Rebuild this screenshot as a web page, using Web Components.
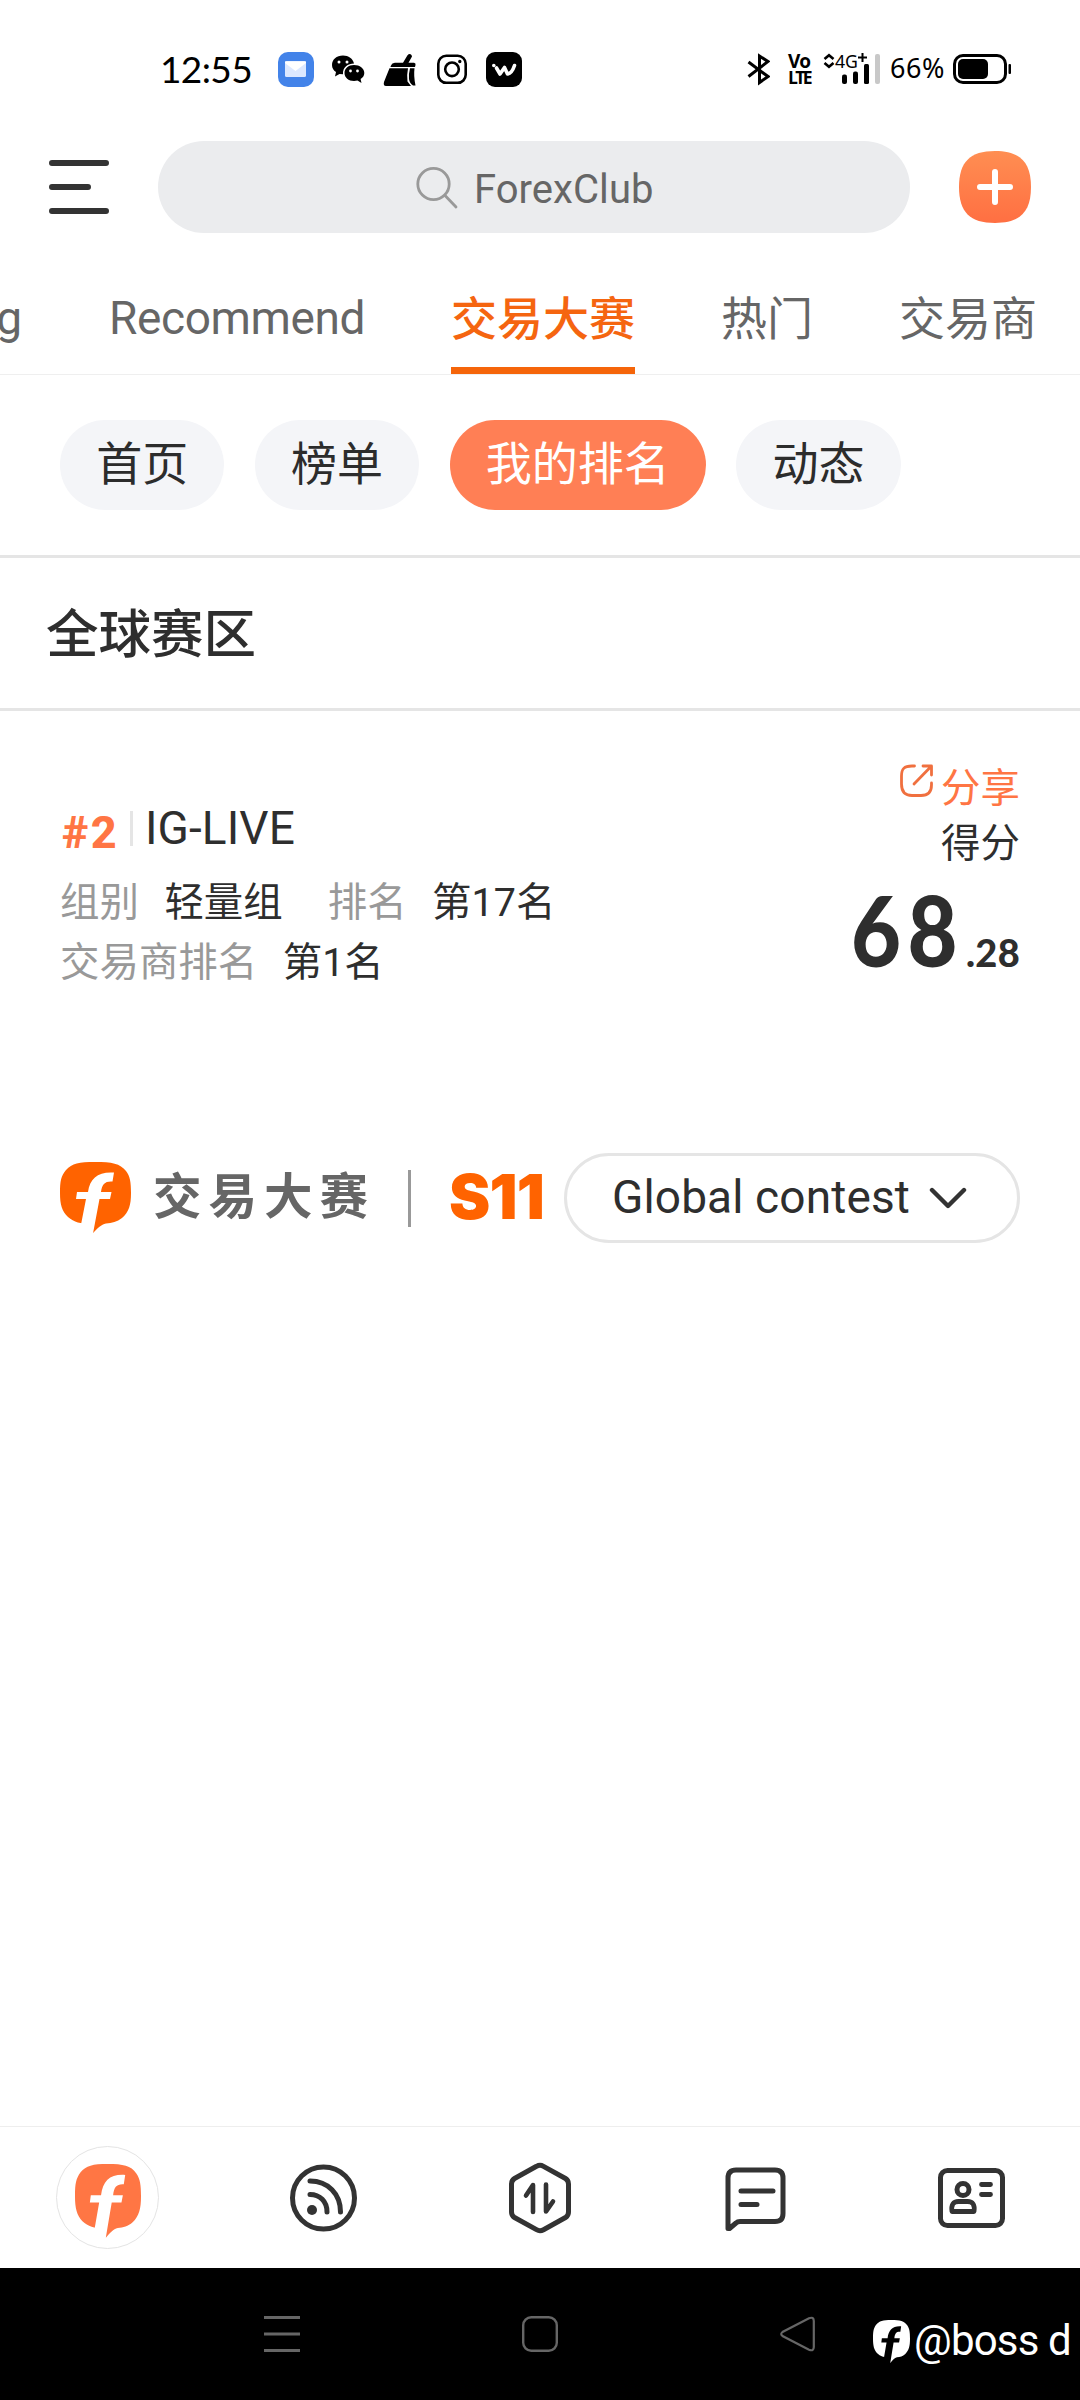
<!DOCTYPE html>
<html lang="zh-CN">
<head>
<meta charset="utf-8">
<title>交易大赛</title>
<style>
html,body{margin:0;padding:0;background:#fff}
body{width:1080px;height:2400px;overflow:hidden;font-family:Roboto,"Noto Sans CJK SC",sans-serif;color:#2e2e2e}
</style>
</head>
<body>
<contest-app></contest-app>
<script>
const define = (name, html, setup) => {
  const tpl = document.createElement('template');
  tpl.innerHTML = html;
  customElements.define(name, class extends HTMLElement {
    connectedCallback() {
      if (this.shadowRoot) return;
      this.attachShadow({mode: 'open'}).appendChild(tpl.content.cloneNode(true));
      if (setup) setup(this);
    }
  });
};

/* One line of text, tracked so that its advance equals the w attribute */
define('fit-line', `<style>:host{display:block;white-space:pre;flex:none}span{display:inline-block}</style><span><slot></slot></span>`, el => {
  const w = parseFloat(el.getAttribute('w'));
  if (!w) return;
  const s = el.shadowRoot.querySelector('span');
  const n = el.textContent.length;
  s.style.letterSpacing = (w - s.getBoundingClientRect().width) / n + 'px';
  el.style.width = w + 'px';
});

/* Speech-bubble brand mark; --f is the colour of the letter cut-out */
define('brand-mark', `<style>:host{display:block;flex:none}svg{display:block;width:100%;height:100%}</style>
<svg viewBox="0 0 71 71" preserveAspectRatio="none">
<path fill="currentColor" d="M35 0C52 0 60 1.500 66 9C70 14 71 20 71 31C71 43 69 50 62 56C57 60 52 61 46 61.500C41 62.500 38 66 33 71L30 62C21 62 14 60 8 55C2 49 0 43 0 31C0 19 1 14 6 8C12 1.500 19 0 35 0Z"/>
<path fill="var(--f,#fff)" d="M54 10.500L52.500 19.500C45 19 42 22 41 30H51.500L50 37H39.500L33 71.500H19L21.500 60L26 37H16L17 30H28C30 16 38 9.500 54 10.500Z"/></svg>`);

define('status-bar', `<style>
:host{display:flex;height:138px;align-items:flex-start;box-sizing:border-box;padding:52px 69px 0 160px;color:#000}
svg{display:block;flex:none}
.time{font:37px/34px Lato,sans-serif;margin-right:26px}
.sp{flex:1}
.volte{display:flex;flex-direction:column;font-family:"Open Sans",sans-serif;font-weight:700;width:22px;margin:1px 13px 0 18px}
.volte fit-line{height:16px;font-size:19px;line-height:17px}
.volte fit-line+fit-line{font-size:17.500px}
.net{font:18px/20px "Noto Sans",sans-serif;width:58px;overflow:visible}
.pct{font:27px/32px "Noto Sans",sans-serif;margin:0 8px 0 9px}
</style>
<fit-line class="time" w="92">12:55</fit-line>
<svg width="36" height="36" viewBox="0 0 36 36"><rect width="36" height="35" rx="10" fill="#4383e9"/><rect x="7" y="9" width="21" height="16" rx="1.500" fill="#dce8ff"/><path d="M7 9.500H28V11L17.500 19L7 11Z" fill="#fff"/></svg>
<svg width="36" height="36" viewBox="0 0 36 36" style="margin-left:16px"><path d="M13 3.500C6.500 3.500 2 7.500 2 13C2 16 3.500 18.500 6 20L5 24.500L9.500 22L13 22.300C12.500 15 18 11.500 24 11.500C23 6.500 18.500 3.500 13 3.500Z"/><path d="M24 13C18.500 13 14.500 16.500 14.500 21C14.500 25.500 18.500 29 24 29L27.500 28.500L31.500 31L30.600 27C33 25.500 34.300 23.500 34.300 21C34.300 16.500 29.700 13 24 13Z"/><g fill="#fff"><circle cx="9" cy="10" r="1.500"/><circle cx="17" cy="10" r="1.500"/><circle cx="20.500" cy="19" r="1.400"/><circle cx="27.500" cy="19" r="1.400"/></g></svg>
<svg width="36" height="36" viewBox="0 0 36 36" style="margin-left:16px"><path d="M8.500 15C9.500 11.500 11 10.700 14 10.700H21L25.500 3.200Q27.500 1 29.500 3L30 4.500L26.500 10.700H32Q34 11 33.500 13L33 15ZM7.500 16.300H26Q24.500 24 25.500 29.500L29 34H4Q1 34 2 30Q4 25 7.500 16.300ZM28 16.300H32.500Q31.500 24 33.500 33.500H31Q27.500 31 27 27Q26.500 22 28 16.300Z"/></svg>
<svg width="36" height="36" viewBox="0 0 36 36" style="margin-left:16px" fill="none" stroke="#000" stroke-width="2.600"><rect x="4.300" y="3.800" width="27.400" height="27" rx="8"/><circle cx="18" cy="17.300" r="6.800"/><circle cx="25.800" cy="9.500" r="1" fill="#000" stroke-width="1.400"/></svg>
<svg width="36" height="36" viewBox="0 0 36 36" style="margin-left:16px"><rect width="36" height="35" rx="9"/><path d="M10.500 16L14 22L18.500 15.500L21.500 22C25 21.500 27 18 28.500 13.500" fill="none" stroke="#fff" stroke-width="3.600" stroke-linecap="round" stroke-linejoin="round"/><circle cx="7.800" cy="13.500" r="1.800" fill="#fff"/></svg>
<div class="sp"></div>
<svg width="24" height="36" viewBox="0 0 24 36" fill="none" stroke="#000" stroke-width="3"><path d="M2.500 10L22 24.500L13.500 30.500V4L22 9.500L2.500 24.500"/></svg>
<div class="volte"><fit-line w="22">Vo</fit-line><fit-line w="22">LTE</fit-line></div>
<svg class="net" width="58" height="36" viewBox="0 0 58 36"><path d="M1.500 7L6 3.200L10.500 7M1.500 11L6 14.800L10.500 11" fill="none" stroke="#000" stroke-width="2.600"/><text x="12" y="16" textLength="23" lengthAdjust="spacingAndGlyphs">4G</text><path d="M35 5.500H44M39.500 1V10" stroke="#000" stroke-width="2"/><rect x="19" y="22.500" width="5" height="9.500" rx="2"/><rect x="30" y="19.500" width="5" height="12.500" rx="2"/><rect x="41" y="12" width="5" height="20" rx="1.500"/><rect x="52" y="2" width="5" height="30" rx="2" fill="#c8c8c8"/></svg>
<fit-line class="pct" w="55">66%</fit-line>
<svg width="58" height="36" viewBox="1 0 58 36"><rect x="2.500" y="3.500" width="51" height="27" rx="8.500" fill="none" stroke="#000" stroke-width="3"/><rect x="6" y="7" width="30" height="20" rx="5"/><rect x="56.500" y="12" width="2.500" height="10" rx="1"/></svg>`);

define('search-header', `<style>
:host{display:flex;height:98px;align-items:flex-start;padding:3px 49px 0;box-sizing:border-box}
svg{display:block;flex:none}
.menu{margin-top:19px}
.pill{margin-left:49px;width:752px;height:92px;border-radius:46px;background:#ebecee;display:flex;align-items:center;justify-content:flex-start;padding-left:258px;box-sizing:border-box;color:#666;font-size:40px;line-height:92px}
.pill fit-line{margin-left:15px;padding-top:5px}
.add{margin:10px 0 0 49px}
</style>
<svg class="menu" width="60" height="54" viewBox="0 0 60 54" stroke="#333" stroke-width="6" stroke-linecap="round"><path d="M3 3H57M3 27H39M3 51H57"/></svg>
<div class="pill"><svg width="43" height="43" viewBox="0 0 43 43" fill="none" stroke="#999" stroke-width="2.800" stroke-linecap="round"><circle cx="17.500" cy="18" r="15.700"/><path d="M29.500 30L40 41"/></svg><fit-line w="179.500">ForexClub</fit-line></div>
<svg class="add" width="72" height="72" viewBox="0 0 72 72"><defs><linearGradient id="g" x2="0" y2="1"><stop stop-color="#ff8e52"/><stop offset="1" stop-color="#ff6f42"/></linearGradient></defs><path d="M36 0C61 0 72 11 72 36S61 72 36 72S0 61 0 36S11 0 36 0Z" fill="url(#g)"/><path d="M21 36H51M36 21V51" stroke="#fff" stroke-width="6" stroke-linecap="round"/></svg>`);

define('tab-strip', `<style>
:host{display:flex;gap:86px;height:139px;box-sizing:border-box;border-bottom:1px solid #efefef;font-size:46px;line-height:122px;color:#666;padding-top:21px;overflow:hidden}
.first{width:22px;margin-right:1px;display:flex;justify-content:flex-end}
.on{color:#f56510;font-weight:500;height:117px;display:flex;flex-direction:column}
.on fit-line{padding-top:1px}
.on i{display:block;height:7px;background:#f5650a;margin-top:-13px;flex:none}
.c{padding-top:1px}
</style>
<div class="first">g</div><fit-line w="256">Recommend</fit-line>
<div class="on"><fit-line w="184">交易大赛</fit-line><i></i></div>
<div class="c">热门</div><fit-line class="c" w="138">交易商</fit-line>`);

define('filter-chip', `<style>
:host{display:block;height:90px;line-height:88px;border-radius:45px;padding:0 36.200px;box-sizing:border-box;background:#f4f5f8;font-size:46px;color:#2c2c2c}
:host([active]){background:#ff7f55;color:#fff}
</style><slot></slot>`);

define('chip-row', `<style>
:host{display:flex;gap:30.400px;height:183px;padding:45px 60px 0;box-sizing:border-box;border-bottom:3px solid #e5e5e5}
</style><filter-chip>首页</filter-chip><filter-chip>榜单</filter-chip><filter-chip active>我的排名</filter-chip><filter-chip>动态</filter-chip>`);

define('section-title', `<style>
:host{display:block;height:153px;box-sizing:border-box;border-bottom:3px solid #e5e5e5;padding-left:46px;font-size:52.500px;line-height:154px;font-weight:500;color:#2e2e2e}
</style><slot></slot>`);

define('info-pair', `<style>:host{display:flex;gap:25.500px}b{font-weight:400;color:#999}</style><b><slot name="k"></slot></b><span><slot></slot></span>`);

define('rank-card', `<style>
:host{display:flex;justify-content:space-between;height:392px;box-sizing:border-box;padding:0 60px;font-size:39.450px}
.l{padding-top:87px}
.h{display:flex;height:60px;line-height:60px;font-size:46px}
.no{font-size:45px;font-weight:800;color:#ff7544;padding-top:5px;margin-left:2px}
.bar{width:3px;height:35px;background:#e5e5e5;margin:13px 12px 0 11px}
.row{display:flex;gap:45px;line-height:60px}
.h+.row{padding-top:15px}
.r{display:flex;flex-direction:column;align-items:flex-end;padding-top:50px;line-height:55px}
.share{display:flex;gap:7px;color:#ff7544}
.share svg{display:block;margin-top:2px}
.score{display:flex;align-items:baseline;font-family:Lato,sans-serif;font-weight:900;line-height:90px;margin-top:13px}
.big{font-size:98px;transform:scaleX(.88);transform-origin:0 50%;margin-left:-4px}.small{font-size:38px}
</style>
<div class="l">
<div class="h"><fit-line class="no" w="57">#2</fit-line><div class="bar"></div><fit-line w="150">IG-LIVE</fit-line></div>
<div class="row"><info-pair><span slot="k">组别</span>轻量组</info-pair><info-pair><span slot="k">排名</span>第17名</info-pair></div>
<div class="row"><info-pair><span slot="k">交易商排名</span>第1名</info-pair></div>
</div>
<div class="r">
<div class="share"><svg width="35" height="35" viewBox="0 0 35 35" fill="none" stroke="#f0703f" stroke-width="2.800" stroke-linecap="round" stroke-linejoin="round"><path d="M15.500 3H13C5 3 2.500 6 2.500 13V21C2.500 29 6 32.500 13 32.500H22C29 32.500 32.500 29 32.500 22V20M24 3H32.500V12M32 3.500L15 21"/></svg><span>分享</span></div>
<div>得分</div>
<div class="score"><fit-line class="big" w="115">68</fit-line><fit-line class="small" w="54">.28</fit-line></div>
</div>`);

define('contest-bar', `<style>
:host{display:flex;align-items:center;height:190px;box-sizing:border-box;padding:0 60px;line-height:90px}
brand-mark{width:71px;height:71px;color:#ff6300;margin-top:-2px}
.name{font-size:48.500px;font-weight:700;color:#666;margin:-1px 0 0 22px}
.bar{width:3px;height:57px;background:#999;margin-left:33px}
.s{color:#ff6300;font:900 62px/90px Inter,sans-serif;margin:-2px 0 0 38px}
.pill{display:flex;align-items:center;margin-left:auto;width:456px;height:90px;box-sizing:border-box;border:3px solid #e5e5e5;border-radius:45px;padding-left:45px;font-size:46px;line-height:82px;color:#2e2e2e}
.pill fit-line{margin-top:-2px}
svg{display:block;margin-left:19px}
</style>
<brand-mark></brand-mark><fit-line class="name" w="222">交易大赛</fit-line><div class="bar"></div><fit-line class="s" w="95">S11</fit-line>
<div class="pill"><fit-line w="298">Global contest</fit-line><svg width="38" height="22" viewBox="0 0 38 22" fill="none" stroke="#333" stroke-width="4.400" stroke-linecap="round" stroke-linejoin="round"><path d="M3 3L19 19L35 3"/></svg></div>`);

define('bottom-nav', `<style>
:host{display:flex;height:142px;box-sizing:border-box;border-top:1px solid #eee;background:#fff}
.i{flex:1;display:flex;align-items:center;justify-content:center}
.ring{width:101px;height:101px;border:1px solid #e4e4e4;border-radius:50%;display:flex;align-items:center;justify-content:center;background:#fff;margin-left:-1px}
brand-mark{width:66px;height:74px;color:#ff7644;margin-top:7px}
svg{display:block}
</style>
<div class="i"><div class="ring"><brand-mark></brand-mark></div></div>
<div class="i"><svg width="72" height="72" viewBox="0 0 72 72" fill="none" stroke="#333" stroke-width="5" stroke-linecap="round"><circle cx="35.500" cy="36" r="31"/><path d="M22 19C40 19 52.500 32 52.500 50M22 32.500C32 32.500 39 39.500 39 50"/><circle cx="24" cy="48" r="5" fill="#333" stroke="none"/></svg></div>
<div class="i"><svg width="72" height="72" viewBox="0 0 72 72" fill="none" stroke="#333" stroke-width="5" stroke-linecap="round" stroke-linejoin="round"><path d="M32.500 4.300Q36 2.300 39.500 4.300L61.500 16.500Q64.500 18.300 64.500 22V50Q64.500 53.700 61.500 55.500L39.500 67.700Q36 69.700 32.500 67.700L10.500 55.500Q7.500 53.700 7.500 50V22Q7.500 18.300 10.500 16.500Z"/><path d="M29 50V23L22 33.500M42 22.500V49.500L49 39.500" stroke-width="4.600"/></svg></div>
<div class="i"><svg width="72" height="72" viewBox="0 0 72 72" fill="none" stroke="#333" stroke-width="5" stroke-linecap="round" stroke-linejoin="round"><path d="M8 66.500V16Q8 8 16 8H55Q63 8 63 16V51.500Q63 59.500 55 59.500H20Q17.500 59.500 16 61L9.500 66.500Z"/><path d="M21 29H53M21 42.500H37"/></svg></div>
<div class="i"><svg width="72" height="72" viewBox="0 0 72 72" fill="none" stroke="#333" stroke-width="5" stroke-linecap="round" stroke-linejoin="round"><rect x="4.500" y="8.500" width="62" height="55" rx="7"/><circle cx="27" cy="27.500" r="6"/><path d="M16 49.500Q14.500 39.500 22.500 39.500H31.500Q39.500 39.500 38 49.500ZM45.500 22.500H54.500M45.500 32.500H54.500" stroke-width="4.800"/></svg></div>`);

define('system-nav', `<style>
:host{display:flex;height:132px;background:#000;align-items:center;box-sizing:border-box;padding-left:264px;color:#fff}
svg{display:block;flex:none}
.sq{margin-left:222px}.tri{margin-left:222px}
.mark{display:flex;align-items:center;margin-left:57px;padding-top:13px;font-size:42px;line-height:50px}
brand-mark{--f:#000;width:37px;height:43px;margin:2px 4px 0 0}
</style>
<svg width="36" height="36" viewBox="0 0 36 36"><path d="M0 1.500H36M0 18H36M0 34.500H36" stroke="#666" stroke-width="3"/></svg>
<svg class="sq" width="36" height="36" viewBox="0 0 36 36"><rect x="1.200" y="1.200" width="33.600" height="33.600" rx="8" fill="none" stroke="#666" stroke-width="2.400"/></svg>
<svg class="tri" width="36" height="36" viewBox="0 0 36 36"><path d="M2.500 16Q0 18 2.500 20L29 33.800Q33.800 35.500 33.800 31V5Q33.800 .500 29 2.200Z" fill="none" stroke="#666" stroke-width="2.200"/></svg>
<div class="mark"><brand-mark></brand-mark><fit-line w="157">@boss d</fit-line></div>`);

define('contest-app', `<style>
:host{display:flex;flex-direction:column;width:1080px;height:2400px;background:#fff;overflow:hidden}
:host>*{flex:none}.grow{flex:1}
</style>
<status-bar></status-bar><search-header></search-header><tab-strip></tab-strip><chip-row></chip-row>
<section-title>全球赛区</section-title><rank-card></rank-card><contest-bar></contest-bar>
<div class="grow"></div><bottom-nav></bottom-nav><system-nav></system-nav>`);
</script>
</body>
</html>
